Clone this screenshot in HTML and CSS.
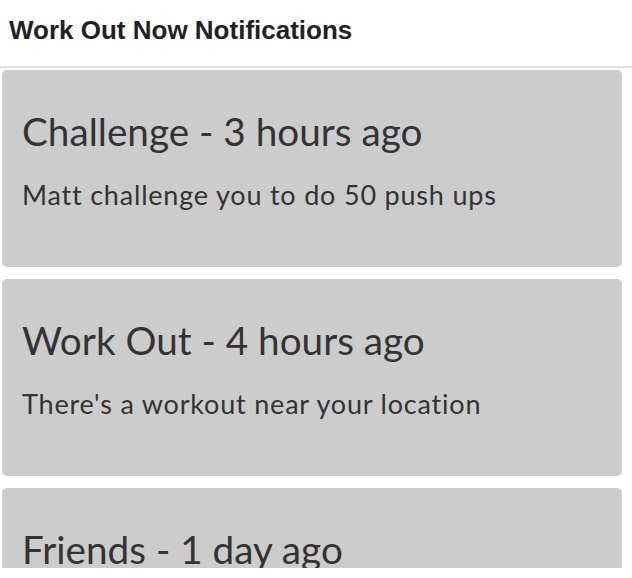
FILE: index.html
```html
<!DOCTYPE html>
<html>
<head>
<meta charset="utf-8">
<link rel="stylesheet" href="styles.css">
</head>
<body>
<div class="app">
  <header class="topbar"><h1 class="title">Work Out Now Notifications</h1></header>
  <main class="list">
    <section class="card">
      <h2 class="card-title">Challenge - 3 hours ago</h2>
      <p class="card-text">Matt challenge you to do 50 push ups</p>
    </section>
    <section class="card">
      <h2 class="card-title">Work Out - 4 hours ago</h2>
      <p class="card-text">There's a workout near your location</p>
    </section>
    <section class="card">
      <h2 class="card-title">Friends - 1 day ago</h2>
    </section>
  </main>
</div>
</body>
</html>
```
FILE: styles.css
```css
html, body { margin: 0; padding: 0; background: #fff; }
.app { height: 568px; overflow: hidden; }
.topbar {
  height: 68px;
  box-sizing: border-box;
  border-bottom: 2px solid #dedede;
  padding: 16px 0 0 9px;
}
.title {
  margin: 0;
  font-family: "Liberation Sans", Arial, sans-serif;
  font-weight: bold;
  font-size: 26px;
  line-height: 28px;
  color: #222;
}
.list {
  display: flex;
  flex-direction: column;
  gap: 12px;
  padding: 2px 10px 0 2px;
}
.card {
  background: #cccccc;
  border-radius: 5px;
  height: 197px;
  padding: 0 20px;
  box-sizing: border-box;
  color: #333;
  font-family: "Lato", "Open Sans", sans-serif;
  display: flex;
  flex-direction: column;
  flex-shrink: 0;
}
.card-title {
  margin: 39px 0 0;
  font-weight: normal;
  font-size: 38.7px;
  line-height: 44px;
  white-space: nowrap;
}
.card-text {
  margin: 26px 0 0;
  font-size: 27px;
  line-height: 32px;
  letter-spacing: 0.8px;
  white-space: nowrap;
}
```
